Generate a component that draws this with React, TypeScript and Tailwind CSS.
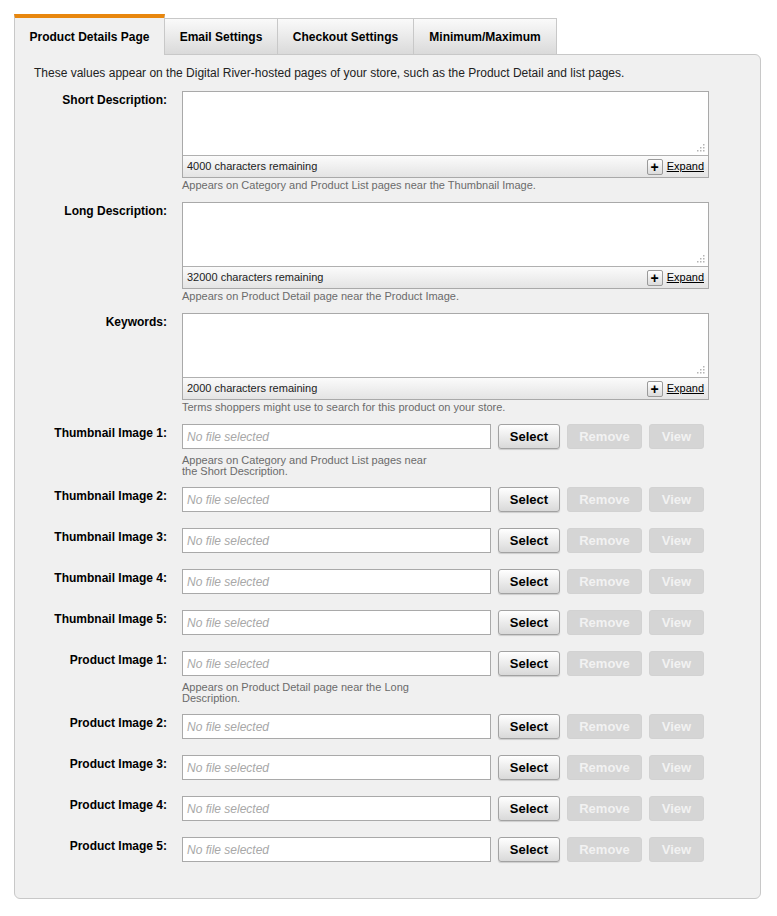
import React from 'react';

const textFields = [
  { label: 'Short Description:', count: '4000', help: 'Appears on Category and Product List pages near the Thumbnail Image.' },
  { label: 'Long Description:', count: '32000', help: 'Appears on Product Detail page near the Product Image.' },
  { label: 'Keywords:', count: '2000', help: 'Terms shoppers might use to search for this product on your store.' },
];

const imageFields = [
  { label: 'Thumbnail Image 1:', help: 'Appears on Category and Product List pages near the Short Description.' },
  { label: 'Thumbnail Image 2:' },
  { label: 'Thumbnail Image 3:' },
  { label: 'Thumbnail Image 4:' },
  { label: 'Thumbnail Image 5:' },
  { label: 'Product Image 1:', help: 'Appears on Product Detail page near the Long Description.' },
  { label: 'Product Image 2:' },
  { label: 'Product Image 3:' },
  { label: 'Product Image 4:' },
  { label: 'Product Image 5:' },
];

function ResizeGrip() {
  return (
    <svg width="9" height="9" viewBox="0 0 9 9" className="absolute right-[3px] bottom-[3px]">
      <rect x="7" y="1" width="1.5" height="1.5" fill="#b4b4b4" />
      <rect x="4" y="4" width="1.5" height="1.5" fill="#b4b4b4" />
      <rect x="7" y="4" width="1.5" height="1.5" fill="#b4b4b4" />
      <rect x="1" y="7" width="1.5" height="1.5" fill="#b4b4b4" />
      <rect x="4" y="7" width="1.5" height="1.5" fill="#b4b4b4" />
      <rect x="7" y="7" width="1.5" height="1.5" fill="#b4b4b4" />
    </svg>
  );
}

function Label({ text }: { text: string }) {
  return (
    <div className="w-[152px] shrink-0 pt-[2px] text-right text-[12px] leading-[14px] font-bold text-black">
      {text}
    </div>
  );
}

function TextField({ label, count, help }: { label: string; count: string; help: string }) {
  return (
    <div className="flex mb-[10px]">
      <Label text={label} />
      <div className="ml-[15px]">
        <div className="w-[527px] border border-[#a9a9a9] bg-white">
          <div className="relative h-[64px] bg-white border-b border-[#b0b0b0]">
            <ResizeGrip />
          </div>
          <div className="flex h-[21px] items-center justify-between bg-gradient-to-b from-[#fbfbfb] to-[#e4e4e4] pl-[4px] pr-[4px]">
            <span className="text-[11px] text-[#222]">{count} characters remaining</span>
            <div className="flex items-center gap-[4px]">
              <span className="flex h-[16px] w-[16px] items-center justify-center rounded-[2px] border border-[#9a9a9a] bg-gradient-to-b from-white to-[#dcdcdc] text-[14px] leading-none font-bold text-black">
                +
              </span>
              <span className="text-[11px] text-black underline">Expand</span>
            </div>
          </div>
        </div>
        <div className="text-[11px] leading-[14px] text-[#6b6b6b]">{help}</div>
      </div>
    </div>
  );
}

function ImageField({ label, help }: { label: string; help?: string }) {
  return (
    <div className={`flex ${help ? 'mb-[10px]' : 'mb-[16px]'}`}>
      <Label text={label} />
      <div className="ml-[15px]">
        <div className="flex gap-[7px]">
          <div className="flex h-[25px] w-[309px] items-center border border-[#a9a9a9] bg-white pl-[4px] text-[12px] italic text-[#a8a8a8]">
            No file selected
          </div>
          <button className="h-[25px] w-[62px] rounded-[3px] border border-[#a2a2a2] bg-gradient-to-b from-white to-[#d9d9d9] text-[13px] font-bold text-black shadow-[0_1px_1px_rgba(0,0,0,0.15)]">
            Select
          </button>
          <button className="h-[25px] w-[75px] rounded-[3px] border border-[#d2d2d2] bg-[#d5d5d5] text-[13px] font-bold text-[#f2f2f2]">
            Remove
          </button>
          <button className="h-[25px] w-[55px] rounded-[3px] border border-[#d2d2d2] bg-[#d5d5d5] text-[13px] font-bold text-[#f2f2f2]">
            View
          </button>
        </div>
        {help && (
          <div className="mt-[6px] w-[248px] text-[11px] leading-[11px] text-[#6b6b6b]">{help}</div>
        )}
      </div>
    </div>
  );
}

function App() {
  const tabs = [
    { name: 'Email Settings', width: 'w-[113px]' },
    { name: 'Checkout Settings', width: 'w-[136px]' },
    { name: 'Minimum/Maximum', width: 'w-[143px]' },
  ];

  return (
    <div className="min-h-screen bg-white pt-[14px] pl-[14px] font-['Liberation_Sans',Arial,sans-serif]">
      <div className="w-[747px]">
        {/* Tabs */}
        <div className="relative z-10 flex h-[40px] items-end">
          <div className="-mb-px flex h-[41px] w-[151px] items-center justify-center border-t-4 border-x border-t-[#e8870e] border-x-[#c8c8c8] bg-[#f0f0f0] text-[12px] font-bold text-black">
            Product Details Page
          </div>
          {tabs.map((tab) => (
            <div
              key={tab.name}
              className={`flex h-[36px] ${tab.width} items-center justify-center border-t border-r border-[#c8c8c8] bg-gradient-to-b from-[#fafafa] to-[#dadada] text-[12px] font-bold text-black`}
            >
              {tab.name}
            </div>
          ))}
        </div>

        {/* Panel */}
        <div className="rounded-tr-[6px] rounded-b-[6px] border border-[#c8c8c8] bg-[#f0f0f0] pt-[11px] pb-[20px]">
          <p className="pl-[19px] text-[12px] leading-[14px] text-[#222]">
            These values appear on the Digital River-hosted pages of your store, such as the Product Detail and list pages.
          </p>
          <div className="mt-[11px]">
            {textFields.map((f) => (
              <TextField key={f.label} label={f.label} count={f.count} help={f.help} />
            ))}
            {imageFields.map((f) => (
              <ImageField key={f.label} label={f.label} help={f.help} />
            ))}
          </div>
        </div>
      </div>
    </div>
  );
}

export default App;
